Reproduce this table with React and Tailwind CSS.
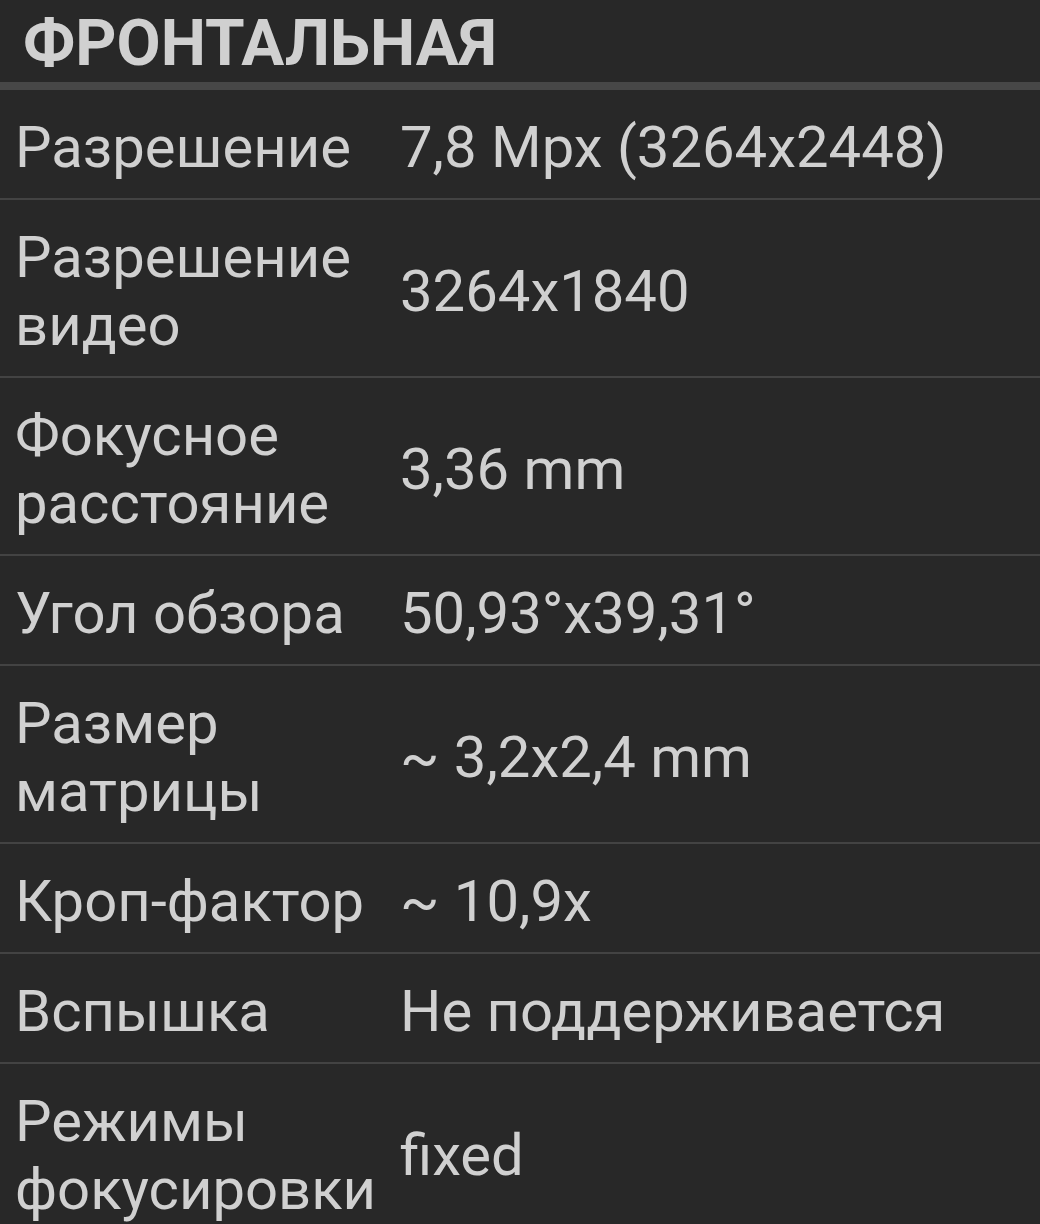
import React from "react";

const ROWS = [
  { label: ["Разрешение"], value: "7,8 Mpx (3264x2448)" },
  { label: ["Разрешение", "видео"], value: "3264x1840" },
  { label: ["Фокусное", "расстояние"], value: "3,36 mm" },
  { label: ["Угол обзора"], value: "50,93°x39,31°" },
  { label: ["Размер", "матрицы"], value: "~ 3,2x2,4 mm" },
  { label: ["Кроп-фактор"], value: "~ 10,9x" },
  { label: ["Вспышка"], value: "Не поддерживается" },
  { label: ["Режимы", "фокусировки"], value: "fixed" },
];

export default function App() {
  return (
    <div
      className="w-[1040px] h-[1224px] overflow-hidden bg-[#282828] text-[#d0d0d0]"
      style={{ fontFamily: "Roboto, 'Noto Sans', sans-serif" }}
    >
      {/* Section title */}
      <div className="h-[82px] pl-[23px] pt-[6px] flex items-center">
        <h2 className="text-[64px] font-bold leading-none">ФРОНТАЛЬНАЯ</h2>
      </div>
      <div className="h-[8px] bg-[#474747]" />

      {/* Spec rows */}
      {ROWS.map((row, i) => (
        <div
          key={i}
          className={`flex items-center pt-[23px] pb-[17px] ${i < ROWS.length - 1 ? "border-b-2 border-[#434343]" : ""}`}
        >
          <div className="w-[400px] shrink-0 pl-[15px] text-[58px] leading-[68px]">
            {row.label.map((l, j) => (
              <div key={j}>{l}</div>
            ))}
          </div>
          <div className="text-[58px] leading-[68px]">{row.value}</div>
        </div>
      ))}
    </div>
  );
}
